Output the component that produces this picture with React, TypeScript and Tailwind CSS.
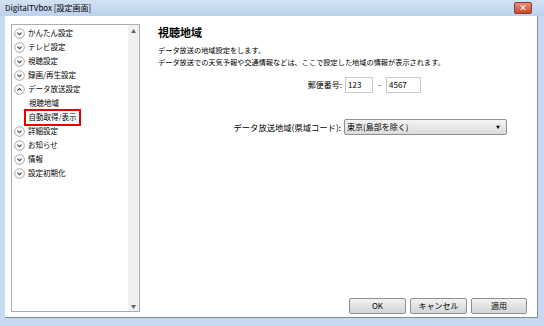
const JP = "font-['Noto_Sans_CJK_JP','Noto_Sans',sans-serif]";

type Item = { label: string; kind: 'down' | 'up' | 'sub'; selected?: boolean };

const ITEMS: Item[] = [
  { label: 'かんたん設定', kind: 'down' },
  { label: 'テレビ設定', kind: 'down' },
  { label: '視聴設定', kind: 'down' },
  { label: '録画/再生設定', kind: 'down' },
  { label: 'データ放送設定', kind: 'up' },
  { label: '視聴地域', kind: 'sub' },
  { label: '自動取得/表示', kind: 'sub', selected: true },
  { label: '詳細設定', kind: 'down' },
  { label: 'お知らせ', kind: 'down' },
  { label: '情報', kind: 'down' },
  { label: '設定初期化', kind: 'down' },
];

function Toggle({ up }: { up?: boolean }) {
  return (
    <svg width="11" height="11" viewBox="0 0 11 11" className="shrink-0">
      <circle cx="5.5" cy="5.5" r="4.8" fill="#fff" stroke="#9a9a9a" strokeWidth="0.9" />
      <path
        d={up ? 'M3.4 6.6 L5.5 4.5 L7.6 6.6' : 'M3.4 4.6 L5.5 6.7 L7.6 4.6'}
        fill="none"
        stroke="#444"
        strokeWidth="1.1"
      />
    </svg>
  );
}

function Button({ label, w }: { label: string; w: string }) {
  return (
    <button
      className={`${w} h-[16px] rounded-[2px] border border-[#8e8f8f] bg-gradient-to-b from-[#f2f2f2] to-[#d4d4d4] text-[8px] leading-none text-black`}
    >
      {label}
    </button>
  );
}

export default function App() {
  return (
    <div className={`w-[544px] h-[326px] bg-[#c6d9ef] flex flex-col overflow-hidden ${JP}`}>
      {/* title bar */}
      <div className="h-[16px] shrink-0 flex items-center justify-between pl-[5px] pr-[12px] bg-gradient-to-b from-[#d3e2f3] to-[#bcd2ec]">
        <span className="text-[8px] leading-none text-black">DigitalTVbox [設定画面]</span>
        <div className="w-[18px] h-[12px] rounded-[2px] bg-gradient-to-b from-[#e8917c] to-[#c9452b] border border-[#8c3a2a] flex items-center justify-center">
          <span className="text-[8px] leading-none text-white font-bold">×</span>
        </div>
      </div>

      {/* client area */}
      <div className="flex-1 ml-[5px] mr-[6px] mb-[8px] border-r border-b border-[#7f8a96] bg-white flex">
        {/* tree */}
        <div className="w-[135px] shrink-0 pl-[6px] pt-[8px] pb-[5px] flex">
          <div className="flex-1 border border-[#adadad] flex">
            <div className="flex-1 pt-[1px] flex flex-col">
              {ITEMS.map((it) =>
                it.kind === 'sub' ? (
                  <div key={it.label} className="h-[14px] flex items-center pl-[17px]">
                    <span
                      className={`text-[7.5px] leading-[8px] text-black ${
                        it.selected ? 'border-[2.5px] border-[#e60000] px-[3px] py-[2.5px] -ml-[5.5px]' : ''
                      }`}
                    >
                      {it.label}
                    </span>
                  </div>
                ) : (
                  <div key={it.label} className="h-[14px] flex items-center gap-[3px] pl-[2px]">
                    <Toggle up={it.kind === 'up'} />
                    <span className="text-[7.5px] leading-none text-black">{it.label}</span>
                  </div>
                ),
              )}
            </div>
            <div className="w-[11px] shrink-0 bg-[#f0f0f0] flex flex-col justify-between items-center py-[3px]">
              <span className="text-[5px] leading-none text-[#606060]">▲</span>
              <span className="text-[5px] leading-none text-[#606060]">▼</span>
            </div>
          </div>
        </div>

        {/* content */}
        <div className="flex-1 flex flex-col pl-[18px] pr-[10px] pt-[8px] pb-[3px]">
          <div className="text-[11px] font-bold leading-[16px] text-black">視聴地域</div>
          <div className="mt-[4px] text-[7.2px] leading-[12px] text-black">
            <div>データ放送の地域設定をします。</div>
            <div>データ放送での天気予報や交通情報などは、ここで設定した地域の情報が表示されます。</div>
          </div>

          <div className="mt-[9px] flex items-center justify-end pr-[106px] gap-[3px]">
            <span className="text-[8px] leading-none text-black">郵便番号:</span>
            <div className="w-[28px] h-[16px] border border-[#c9c9c9] flex items-center pl-[2px] text-[8px] text-black">123</div>
            <span className="w-[7px] text-center text-[8px] text-black">-</span>
            <div className="w-[35px] h-[16px] border border-[#c9c9c9] flex items-center pl-[2px] text-[8px] text-black">4567</div>
          </div>

          <div className="mt-[26px] flex items-center justify-end pr-[20px] gap-[3px]">
            <span className="text-[8.3px] leading-none text-black">データ放送地域(県域コード):</span>
            <div className="w-[163px] h-[16px] rounded-[2px] border border-[#8e8f8f] bg-gradient-to-b from-[#f4f4f4] to-[#dcdcdc] flex items-center justify-between pl-[2px] pr-[6px]">
              <span className="text-[8px] leading-none text-black">東京(島部を除く)</span>
              <span className="text-[4px] leading-none text-black">▼</span>
            </div>
          </div>

          <div className="flex-1" />

          <div className="flex justify-end gap-[4px] pr-[0px]">
            <Button label="OK" w="w-[57px]" />
            <Button label="キャンセル" w="w-[57px]" />
            <Button label="適用" w="w-[56px]" />
          </div>
        </div>
      </div>
    </div>
  );
}
